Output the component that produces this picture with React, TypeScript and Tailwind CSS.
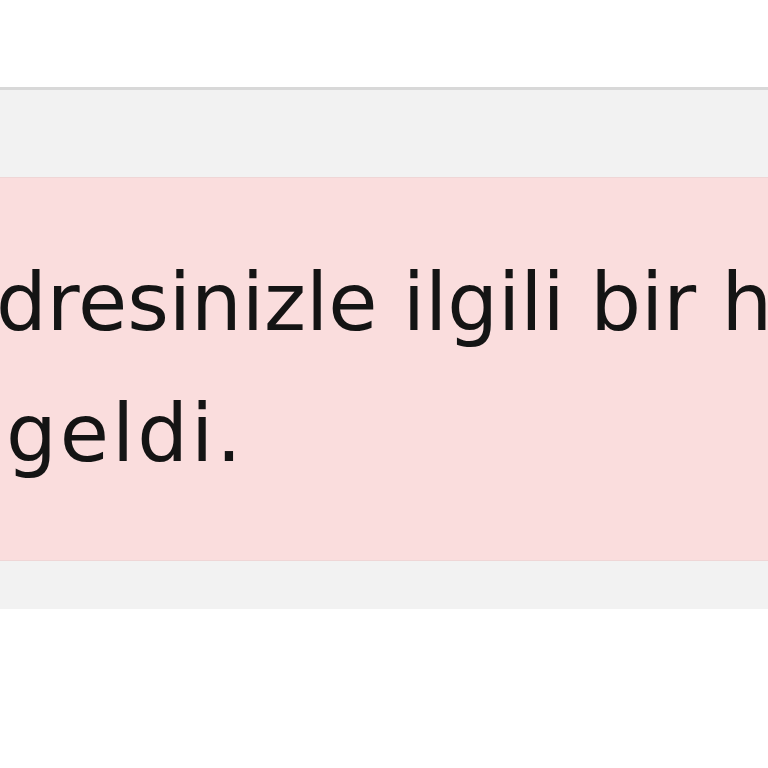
import React from "react";

export default function App() {
  return (
    <div className="w-[768px] h-[768px] overflow-hidden bg-white font-['DejaVu_Sans',sans-serif]">
      <div className="h-[87px] bg-white" />
      <div className="border-t-[3px] border-[#d8d8d8] bg-[#f2f2f2]">
        <div className="h-[87px]" />
        <div className="border-y border-[#efd6d6] bg-[#fadddd] pt-[59px] pb-[61px] text-[#141414] text-[80px] leading-[131px] overflow-hidden">
          <p className="whitespace-nowrap ml-[-53px]">adresinizle ilgili bir hata</p>
          <p className="whitespace-nowrap ml-[6px] tracking-[3px]">geldi.</p>
        </div>
        <div className="h-[48px]" />
      </div>
      <div className="h-[160px] bg-white" />
    </div>
  );
}
